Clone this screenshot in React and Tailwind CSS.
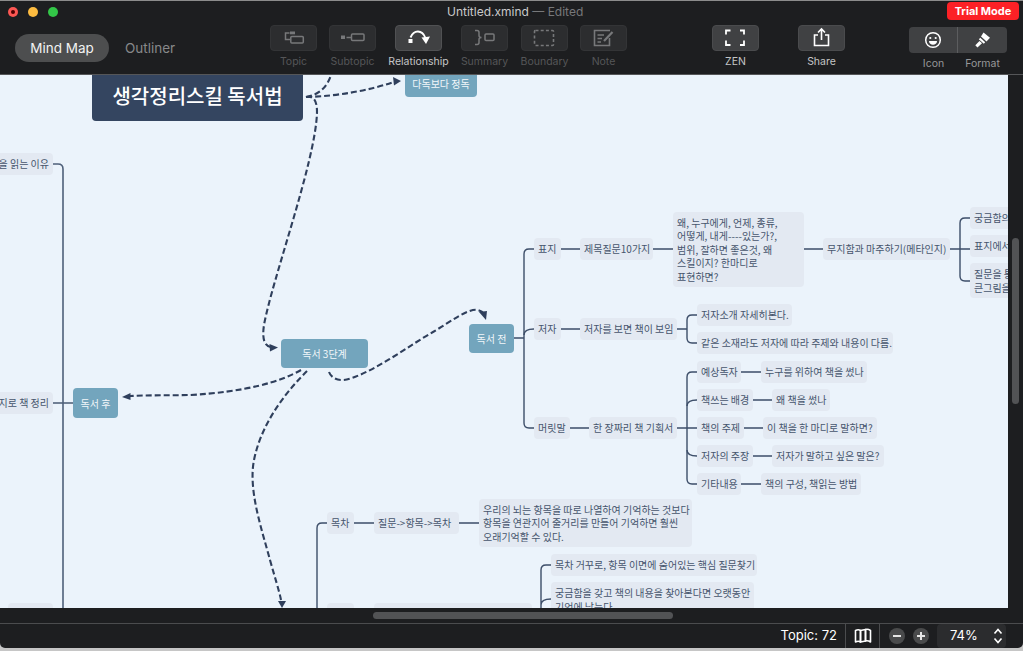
import React from 'react';

const ui = "font-['Inter','Noto_Sans',sans-serif]";

function Tool({ label, active, dim, children }) {
  return (
    <div className="flex flex-col items-center w-[47px] shrink-0">
      <div
        className={
          active
            ? 'w-[47px] h-[26px] rounded-[4px] bg-[#404143] border border-[#505153] text-white'
            : dim
              ? 'w-[47px] h-[26px] rounded-[4px] bg-[#2c2d2f] border border-[#333436] text-[#77787a]'
              : 'w-[47px] h-[26px] rounded-[4px] bg-[#404143] border border-[#4a4b4d] text-white'
        }
      >
        <svg width="45" height="24" viewBox="1 1 45 24" fill="none" stroke="currentColor" strokeWidth="1.5">
          {children}
        </svg>
      </div>
      <span
        className={
          dim
            ? 'mt-[4px] text-[10.5px] leading-[14px] whitespace-nowrap text-[#555658]'
            : 'mt-[4px] text-[10.5px] leading-[14px] whitespace-nowrap text-[#c4c5c6]'
        }
      >
        {label}
      </span>
    </div>
  );
}

function Toolbar() {
  return (
    <div className={`relative h-[75px] shrink-0 bg-[#1d1e20] border-t border-[#8c8c8c] border-b-[1px] border-b-[#555658] ${ui}`}>
      <div className="flex items-center h-[21px] pl-[8px] gap-[10px]">
        <div className="w-[10px] h-[10px] rounded-full bg-[#fc5753] flex items-center justify-center">
          <div className="w-[4px] h-[4px] rounded-full bg-[#4d0000]" />
        </div>
        <div className="w-[10px] h-[10px] rounded-full bg-[#fdbc40]" />
        <div className="w-[10px] h-[10px] rounded-full bg-[#33c748]" />
        <div className="ml-[379px] text-[12px] leading-[16px] text-[#c9c9ca] whitespace-nowrap">
          Untitled.xmind <span className="text-[#77787a]">— Edited</span>
        </div>
      </div>
      <div className="absolute right-[4px] top-[1px] w-[72px] h-[18px] rounded-[4px] bg-[#fc2126] text-white text-[11px] font-bold flex items-center justify-center">
        Trial Mode
      </div>

      <div className="flex items-start pl-[15px] mt-[3px]">
        <div className="mt-[9px] w-[94px] h-[28px] rounded-full bg-[#4d4e4f] text-[#f2f2f2] text-[13.5px] flex items-center justify-center">
          Mind Map
        </div>
        <div className="mt-[9px] ml-[16px] w-[50px] h-[28px] text-[#87888a] text-[13.5px] flex items-center justify-center">
          Outliner
        </div>

        <div className="ml-[95px] flex">
          <Tool label="Topic" dim>
            <rect x="20" y="6.5" width="5" height="2.8" fill="currentColor" stroke="none" />
            <path d="M19.5 8 H15.5 V14.5 H20" />
            <rect x="20.8" y="11.5" width="12.5" height="6.5" rx="1" />
          </Tool>
          <div className="w-[12px]" />
          <Tool label="Subtopic" dim>
            <rect x="12" y="10.5" width="4" height="3.5" fill="currentColor" stroke="none" />
            <path d="M17.5 12.5 H22" />
            <rect x="22.5" y="9" width="12.5" height="6.5" rx="1" />
          </Tool>
          <div className="w-[19px]" />
          <Tool label="Relationship" active>
            <rect x="13.5" y="14" width="4" height="4" fill="currentColor" stroke="none" />
            <path d="M15.5 12.5 C19 4.5 27 4.5 30.5 13" strokeWidth="1.9" />
            <path d="M26.5 12.5 L35 11.5 L31 19 Z" fill="currentColor" stroke="none" />
          </Tool>
          <div className="w-[19px]" />
          <Tool label="Summary" dim>
            <path d="M14 5.5 H16 Q18 5.5 18 7.5 V10.5 Q18 12.5 20.5 12.5 Q18 12.5 18 14.5 V17.5 Q18 19.5 16 19.5 H14" />
            <rect x="24" y="9" width="9" height="6.5" rx="1" />
          </Tool>
          <div className="w-[13px]" />
          <Tool label="Boundary" dim>
            <rect x="13.5" y="5.5" width="19" height="15" rx="1" strokeWidth="1.6" strokeDasharray="3 2.2" />
          </Tool>
          <div className="w-[12px]" />
          <Tool label="Note" dim>
            <path d="M30 5.5 H14.5 V20.5 H29.5 V13" strokeWidth="1.6" />
            <path d="M17.5 10 H24 M17.5 13.5 H22 M17.5 17 H21" />
            <path d="M24 16 L32.5 7" strokeWidth="2.2" />
          </Tool>
          <div className="w-[85px]" />
          <Tool label="ZEN">
            <path d="M14 9.5 V5.5 H18.5 M28 5.5 H32 V9.5 M14 15.5 V20 H18.5 M28 20 H32 V15.5" strokeWidth="1.8" />
          </Tool>
          <div className="w-[39px]" />
          <Tool label="Share">
            <path d="M20 10 H16.5 V20.5 H30.5 V10 H27" strokeWidth="1.6" />
            <path d="M23.5 15 V4.5 M20 7.5 L23.5 4 L27 7.5" strokeWidth="1.6" />
          </Tool>
        </div>

        <div className="ml-[64px] mt-[2px] flex flex-col">
          <div className="flex w-[98px] h-[26px] rounded-[4px] bg-[#404143] text-white">
            <div className="w-[49px] flex items-center justify-center border-r border-[#5c5d5f]">
              <svg width="18" height="18" viewBox="0 0 18 18" fill="none" stroke="currentColor" strokeWidth="1.5">
                <circle cx="9" cy="9" r="7.3" />
                <circle cx="6.3" cy="7" r="1.1" fill="currentColor" stroke="none" />
                <circle cx="11.7" cy="7" r="1.1" fill="currentColor" stroke="none" />
                <path d="M5 10 H13 C13 15 5 15 5 10 Z" fill="currentColor" stroke="none" />
              </svg>
            </div>
            <div className="w-[49px] flex items-center justify-center">
              <svg width="18" height="18" viewBox="0 0 18 18" fill="currentColor">
                <path d="M9.5 1.5 L16 6.8 L12.5 10.5 L7 5.5 Z" />
                <path d="M6.3 6.8 L11.2 11.2 L9.8 12.8 L4.8 8.3 Z" />
                <path d="M5.5 10 L8 12.3 L3.5 16.5 L1.3 14.2 Z" />
              </svg>
            </div>
          </div>
          <div className="flex mt-[4px] text-[10.5px] leading-[14px] text-[#97989a]">
            <span className="w-[49px] text-center">Icon</span>
            <span className="w-[49px] text-center">Format</span>
          </div>
        </div>
      </div>
    </div>
  );
}

function Topic({ className, children }) {
  return (
    <div className={`absolute h-[22px] rounded-[4px] bg-[#e3e9f2] text-[#46556d] text-[10px] leading-[13.5px] flex items-center px-[4px] whitespace-nowrap ${className}`}>
      {children}
    </div>
  );
}

function Main({ className, children }) {
  return (
    <div className={`absolute rounded-[4px] bg-[#73a5bd] text-[#f2f7fa] text-[10px] flex items-center justify-center whitespace-nowrap ${className}`}>
      {children}
    </div>
  );
}

function Lines() {
  return (
    <svg className="absolute left-0 top-0" width="1008" height="533" viewBox="0 75 1008 533" fill="none">
      <g stroke="#3d4e69" strokeWidth="1.4">
        <path d="M534 249 H529 Q524 249 524 254 V423 Q524 428 529 428 H534" />
        <path d="M524 335 Q524 329 534 329 M514 338 H524" />
        <path d="M561 249 H580 M653 249 H673 M804 249 H823 M950 249 H970" />
        <path d="M970 218 H965 Q960 218 960 223 V276 Q960 281 965 281 H970" />
        <path d="M561 329 H580 M677 329 H687" />
        <path d="M697 315 H692 Q687 315 687 320 V338 Q687 343 692 343 H697" />
        <path d="M570 428 H589 M677 428 H697" />
        <path d="M697 372 H692 Q687 372 687 377 V479 Q687 484 692 484 H697" />
        <path d="M687 406 Q687 400 697 400 M687 450 Q687 456 697 456" />
        <path d="M741 372 H761 M753 400 H772 M744 428 H763 M753 456 H772 M741 484 H761" />
        <path d="M327 523 H322 Q317 523 317 528 V608 M354 523 H374 M459 523 H479" />
        <path d="M551 565 H546 Q541 565 541 570 V608 M541 605 Q541 599 551 599" />
        <path d="M53 403 H73" />
        <path d="M53 164 H58 Q63 164 63 169 V608" strokeWidth="1.6" stroke="#4f607a" />
      </g>
      <g stroke="#2f3f5c" strokeWidth="2.1" strokeDasharray="6 3">
        <path d="M306 97 C 318 95, 327 88, 331 75" />
        <path d="M306 97 C 340 96, 370 90, 394 82" />
        <path d="M306 97 C 312 96, 317 98, 317 112 C 316 160, 272 280, 264 325 C 262 338, 264 346, 271 347" />
        <path d="M329 372 C 332 380, 342 382, 352 378 C 380 368, 410 345, 433 332 C 450 322, 468 308, 478 310 C 481 311, 483 312, 484 314" />
        <path d="M301 370 C 280 382, 245 392, 190 395 C 170 395.5, 150 395, 130 396" />
        <path d="M307 371 C 290 388, 262 420, 254 460 C 248 490, 262 530, 270 560 C 275 578, 279 590, 281 600" />
      </g>
      <g fill="#2f3f5c">
        <path d="M401 81 L393 77 L394 85.5 Z" />
        <path d="M278 347.5 L269.5 344 L270 351.5 Z" />
        <path d="M486 320 L479 312 L487 311 Z" />
        <path d="M122 397 L130.5 393 L130.5 400 Z" />
        <path d="M282 608 L278 601 L286 601 Z" />
      </g>
    </svg>
  );
}

function Canvas() {
  return (
    <div className="relative flex-1 bg-[#ebf3fb] overflow-hidden font-['Noto_Sans_CJK_KR','Noto_Sans',sans-serif]">
      <Lines />

      <div className="absolute left-[92px] top-[-4px] w-[211px] h-[50px] rounded-[4px] bg-[#344560] text-white text-[20px] font-medium flex items-center justify-center whitespace-nowrap">
        생각정리스킬 독서법
      </div>
      <Main className="left-[405px] top-[-6px] w-[72px] h-[28px]">다독보다 정독</Main>
      <Main className="left-[281px] top-[264px] w-[87px] h-[29px]">독서 3단계</Main>
      <Main className="left-[469px] top-[249px] w-[45px] h-[29px]">독서 전</Main>
      <Main className="left-[73px] top-[313px] w-[45px] h-[30px]">독서 후</Main>

      <Topic className="left-[-20px] top-[78px] w-[73px] justify-end">책을 읽는 이유</Topic>
      <Topic className="left-[-60px] top-[317px] w-[113px] justify-end">한 페이지로 책 정리</Topic>
      <Topic className="left-[8px] top-[528px] w-[45px]" />

      <Topic className="left-[534px] top-[163px] w-[27px]">표지</Topic>
      <Topic className="left-[580px] top-[163px] w-[73px]">제목질문10가지</Topic>
      <Topic className="left-[673px] top-[137px] w-[131px] !h-[75px]">
        <span>
          왜, 누구에게, 언제, 종류,
          <br />
          어떻게, 내게----있는가?,
          <br />
          범위, 잘하면 좋은것, 왜
          <br />
          스킬이지? 한마디로
          <br />
          표현하면?
        </span>
      </Topic>
      <Topic className="left-[823px] top-[163px] w-[127px]">무지함과 마주하기(메타인지)</Topic>
      <Topic className="left-[970px] top-[132px] w-[80px]">궁금함의 시작</Topic>
      <Topic className="left-[970px] top-[160px] w-[80px]">표지에서 찾기</Topic>
      <Topic className="left-[970px] top-[188px] w-[80px] !h-[35px]">
        <span>
          질문을 통해
          <br />
          큰그림을 본다
        </span>
      </Topic>

      <Topic className="left-[534px] top-[243px] w-[27px]">저자</Topic>
      <Topic className="left-[580px] top-[243px] w-[97px]">저자를 보면 책이 보임</Topic>
      <Topic className="left-[697px] top-[229px] w-[95px]">저자소개 자세히본다.</Topic>
      <Topic className="left-[697px] top-[257px] w-[196px]">같은 소재라도 저자에 따라 주제와 내용이 다름.</Topic>

      <Topic className="left-[534px] top-[342px] w-[36px]">머릿말</Topic>
      <Topic className="left-[589px] top-[342px] w-[88px]">한 장짜리 책 기획서</Topic>
      <Topic className="left-[697px] top-[286px] w-[44px]">예상독자</Topic>
      <Topic className="left-[761px] top-[286px] w-[106px]">누구를 위하여 책을 썼나</Topic>
      <Topic className="left-[697px] top-[314px] w-[56px]">책쓰는 배경</Topic>
      <Topic className="left-[772px] top-[314px] w-[58px]">왜 책을 썼나</Topic>
      <Topic className="left-[697px] top-[342px] w-[47px]">책의 주제</Topic>
      <Topic className="left-[763px] top-[342px] w-[114px]">이 책을 한 마디로 말하면?</Topic>
      <Topic className="left-[697px] top-[370px] w-[56px]">저자의 주장</Topic>
      <Topic className="left-[772px] top-[370px] w-[112px]">저자가 말하고 싶은 말은?</Topic>
      <Topic className="left-[697px] top-[398px] w-[44px]">기타내용</Topic>
      <Topic className="left-[761px] top-[398px] w-[100px]">책의 구성, 책읽는 방법</Topic>

      <Topic className="left-[327px] top-[437px] w-[27px]">목차</Topic>
      <Topic className="left-[374px] top-[437px] w-[85px]">질문-&gt;항목-&gt;목차</Topic>
      <Topic className="left-[479px] top-[424px] w-[213px] !h-[48px]">
        <span>
          우리의 뇌는 항목을 따로 나열하여 기억하는 것보다
          <br />
          항목을 연관지어 줄거리를 만들어 기억하면 훨씬
          <br />
          오래기억할 수 있다.
        </span>
      </Topic>
      <Topic className="left-[551px] top-[479px] w-[206px]">목차 거꾸로, 항목 이면에 숨어있는 핵심 질문찾기</Topic>
      <Topic className="left-[551px] top-[507px] w-[203px] !h-[35px]">
        <span>
          궁금함을 갖고 책의 내용을 찾아본다면 오랫동안
          <br />
          기억에 남는다.
        </span>
      </Topic>
      <Topic className="left-[327px] top-[528px] w-[27px]" />
      <Topic className="left-[374px] top-[528px] w-[158px]" />
    </div>
  );
}

function StatusBar() {
  return (
    <div className={`flex items-stretch justify-end h-[25px] shrink-0 bg-[#1d1e20] border-t border-[#4b4c4e] rounded-b-[5px] text-white ${ui}`}>
      <div className="flex items-center pr-[8px] text-[13px]">Topic: 72</div>
      <div className="w-[35px] flex items-center justify-center border-l border-r border-[#4b4c4e]">
        <svg width="18" height="16" viewBox="0 0 18 16" fill="none" stroke="currentColor" strokeWidth="1.6" strokeLinejoin="round">
          <path d="M1.5 2.5 C3.5 1.5 5 1.5 6.5 2.5 V14 C5 13 3.5 13 1.5 14 Z" />
          <path d="M6.5 2.5 L11.5 1.5 V13 L6.5 14 Z" />
          <path d="M11.5 1.5 C13 1 15 1.5 16.5 2.5 V14 C15 13 13 12.5 11.5 13 Z" />
        </svg>
      </div>
      <div className="flex items-center pl-[9px] gap-[8px]">
        <div className="w-[16px] h-[16px] rounded-full bg-[#4a4b4c] flex items-center justify-center">
          <div className="w-[8px] h-[2px] bg-[#e6e6e6]" />
        </div>
        <div className="relative w-[16px] h-[16px] rounded-full bg-[#4a4b4c] flex items-center justify-center">
          <div className="w-[8px] h-[2px] bg-[#e6e6e6]" />
          <div className="absolute w-[2px] h-[8px] bg-[#e6e6e6]" />
        </div>
      </div>
      <div className="ml-[8px] mr-[17px] w-[69px] rounded-[4px] bg-[#2b2c2e] flex items-center relative">
        <span className="ml-[13px] text-[13px]">74%</span>
        <svg className="absolute right-[2px] top-[3px]" width="12" height="18" viewBox="0 0 12 18" fill="none" stroke="currentColor" strokeWidth="1.6">
          <path d="M2.5 6.5 L6 2.5 L9.5 6.5 M2.5 11.5 L6 15.5 L9.5 11.5" />
        </svg>
      </div>
    </div>
  );
}

export default function App() {
  return (
    <div className="w-[1023px] h-[651px] flex flex-col bg-[#c6c6c6] overflow-hidden">
      <Toolbar />
      <div className="flex h-[548px] shrink-0 bg-[#1d1e20]">
        <div className="flex flex-col w-[1008px]">
          <Canvas />
          <div className="h-[15px] shrink-0 pt-[4px] pl-[373px]">
            <div className="w-[300px] h-[7px] rounded-full bg-[#525355]" />
          </div>
        </div>
        <div className="w-[15px] pl-[4px] pt-[163px]">
          <div className="w-[7px] h-[166px] rounded-full bg-[#525355]" />
        </div>
      </div>
      <StatusBar />
    </div>
  );
}
